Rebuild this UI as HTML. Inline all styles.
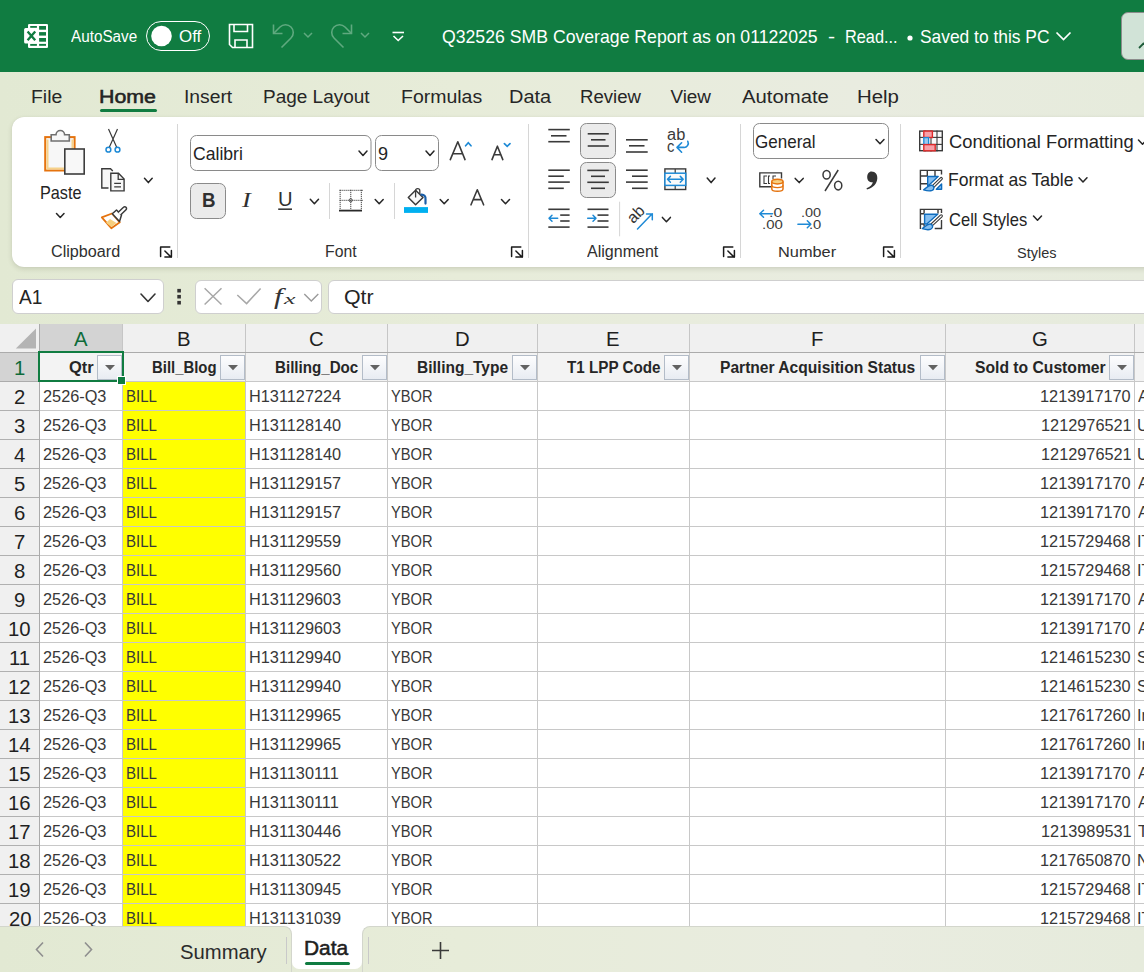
<!DOCTYPE html><html><head><meta charset="utf-8"><style>
html,body{margin:0;padding:0;}
body{width:1144px;height:972px;overflow:hidden;position:relative;background:#e6ebda;font-family:'Liberation Sans',sans-serif;}
.t{position:absolute;white-space:pre;line-height:1;transform-origin:0 0;}
.b{position:absolute;box-sizing:border-box;}
.s{position:absolute;overflow:visible;}
</style></head><body>
<div class="b" style="left:0px;top:72px;width:1144px;height:900px;background:linear-gradient(90deg,#e2e9d3 0%,#e7ecd9 40%,#e9ece0 75%,#e6ebdc 100%);"></div>
<div class="b" style="left:0px;top:0px;width:1144px;height:72px;background:#107c41;"></div>
<svg class="s" style="left:0px;top:0px;" width="72" height="72" viewBox="0 0 72 72"><rect x="28" y="23.9" width="20" height="24.1" rx="1.2" fill="#fff"/>
<g fill="#107c41"><rect x="39.1" y="26" width="6.9" height="3.7"/><rect x="39.1" y="32.1" width="6.9" height="3.5"/><rect x="39.1" y="38" width="6.9" height="3.7"/><rect x="39.1" y="43.9" width="6.9" height="1.9"/>
<rect x="30.2" y="26" width="6.7" height="1.8"/><rect x="30.2" y="43.9" width="6.7" height="1.9"/></g>
<rect x="24.1" y="28" width="13.9" height="15.6" rx="1.5" fill="#fff"/>
<path d="M27.6 31.4 L35.2 40.3 M35.2 31.4 L27.6 40.3" stroke="#107c41" stroke-width="2.3"/></svg>
<div class="t" style="left:71.30px;top:29.00px;font-size:16.00px;color:#ffffff;transform:scaleX(0.9543);">AutoSave</div>
<div class="b" style="left:146px;top:21px;width:64px;height:30px;border:1.5px solid #fff;border-radius:15px;"></div>
<svg class="s" style="left:150px;top:25px;" width="24" height="22" viewBox="0 0 24 22"><circle cx="11.5" cy="11" r="10.3" fill="#fff"/></svg>
<div class="t" style="left:178.64px;top:29.00px;font-size:16.90px;color:#ffffff;transform:scaleX(1.0024);">Off</div>
<svg class="s" style="left:228px;top:23px;" width="26" height="26" viewBox="0 0 26 26"><g fill="none" stroke="#fff" stroke-width="1.6">
<path d="M1.5 1.5 H24.5 V24.5 H4.5 L1.5 21.5 Z"/>
<path d="M6 1.5 V8.5 H19.5 V1.5"/>
<path d="M7 24.5 V17 H19 V24.5"/>
</g></svg>
<svg class="s" style="left:272px;top:23px;" width="24" height="26" viewBox="0 0 24 26"><g fill="none" stroke="#5fa97f" stroke-width="1.6">
<path d="M1.5 1.5 V10.5 H10.5"/>
<path d="M1.8 10.2 L8 4 A7.5 7.5 0 0 1 19 15 L9.5 24.5"/>
</g></svg>
<svg class="s" style="left:303px;top:32px;" width="11" height="7" viewBox="0 0 11 7"><path d="M1 1 L5 5 L9 1" fill="none" stroke="#5fa97f" stroke-width="1.5"/></svg>
<svg class="s" style="left:329px;top:23px;" width="24" height="26" viewBox="0 0 24 26"><g fill="none" stroke="#5fa97f" stroke-width="1.6">
<path d="M22.5 1.5 V10.5 H13.5"/>
<path d="M22.2 10.2 L16 4 A7.5 7.5 0 0 0 5 15 L14.5 24.5"/>
</g></svg>
<svg class="s" style="left:360px;top:32px;" width="11" height="7" viewBox="0 0 11 7"><path d="M1 1 L5 5 L9 1" fill="none" stroke="#5fa97f" stroke-width="1.5"/></svg>
<svg class="s" style="left:392px;top:31px;" width="13" height="11" viewBox="0 0 13 11"><path d="M0.5 1.5 H12" stroke="#fff" stroke-width="1.6"/><path d="M1.5 5 L6.2 9.5 L11 5" fill="none" stroke="#fff" stroke-width="1.6"/></svg>
<div class="t" style="left:441.60px;top:28.00px;font-size:18.20px;color:#ffffff;transform:scaleX(0.9708);">Q32526 SMB Coverage Report as on 01122025</div>
<div class="t" style="left:827.54px;top:28.00px;font-size:18.20px;color:#ffffff;transform:scaleX(1.1662);">-</div>
<div class="t" style="left:844.69px;top:28.00px;font-size:18.20px;color:#ffffff;transform:scaleX(0.8971);">Read...</div>
<svg class="s" style="left:906px;top:34px;" width="8" height="8" viewBox="0 0 8 8"><circle cx="4" cy="4" r="2.6" fill="#fff"/></svg>
<div class="t" style="left:919.82px;top:28.00px;font-size:18.20px;color:#ffffff;transform:scaleX(0.9557);">Saved to this PC</div>
<svg class="s" style="left:1055px;top:31px;" width="18" height="11" viewBox="0 0 18 11"><path d="M1.5 1.5 L8.5 8.5 L15.5 1.5" fill="none" stroke="#fff" stroke-width="1.7"/></svg>
<div class="b" style="left:1121px;top:12px;width:40px;height:48px;background:#d1e3d7;border:1.5px solid #8c8c8c;border-radius:7px;"></div>
<svg class="s" style="left:1138px;top:40px;" width="8" height="10" viewBox="0 0 8 10"><path d="M1 8 L6 3" stroke="#1c5a38" stroke-width="1.8"/></svg>
<div class="t" style="left:31.25px;top:88.00px;font-size:18.90px;color:#262626;transform:scaleX(1.0261);">File</div>
<div class="t" style="left:99.29px;top:88.00px;font-size:18.90px;color:#262626;transform:scaleX(1.1311);-webkit-text-stroke:0.55px #1f1f1f;">Home</div>
<div class="t" style="left:183.96px;top:88.00px;font-size:18.90px;color:#262626;transform:scaleX(1.0208);">Insert</div>
<div class="t" style="left:263.48px;top:88.00px;font-size:18.90px;color:#262626;transform:scaleX(1.0046);">Page Layout</div>
<div class="t" style="left:400.94px;top:88.00px;font-size:18.90px;color:#262626;transform:scaleX(1.0308);">Formulas</div>
<div class="t" style="left:509.40px;top:88.00px;font-size:18.90px;color:#262626;transform:scaleX(1.0556);">Data</div>
<div class="t" style="left:579.51px;top:88.00px;font-size:18.90px;color:#262626;transform:scaleX(0.9838);">Review</div>
<div class="t" style="left:670.41px;top:88.00px;font-size:18.90px;color:#262626;">View</div>
<div class="t" style="left:742.00px;top:88.00px;font-size:18.90px;color:#262626;transform:scaleX(1.0744);">Automate</div>
<div class="t" style="left:856.87px;top:88.00px;font-size:18.90px;color:#262626;transform:scaleX(1.0801);">Help</div>
<div class="b" style="left:100px;top:109px;width:57px;height:3px;background:#107c41;border-radius:2px;"></div>
<div class="b" style="left:12px;top:117px;width:1160px;height:150px;background:#fff;border-radius:12px;box-shadow:0 2px 5px rgba(60,70,40,0.16),0 0 1px rgba(0,0,0,0.10);"></div>
<svg class="s" style="left:0px;top:0px;pointer-events:none;" width="1144" height="972" viewBox="0 0 1144 972"><rect x="45.2" y="137.1" width="29.4" height="33.4" fill="#f7f7f7" stroke="#e5730e" stroke-width="2"/><path d="M47.5 139.5 V168.5 H64 M72.5 139.5 V152" fill="none" stroke="#f6d28a" stroke-width="2"/><path d="M51.2 141 V134.8 H56 A4.3 4.3 0 0 1 64.6 134.8 H69.3 V141 Z" fill="#f7f7f7" stroke="#707070" stroke-width="1.6"/><rect x="64.8" y="149" width="19.4" height="25" fill="#f8f8f8" stroke="#3d3d3d" stroke-width="1.6"/><path d="M56.5 213.5 L60.25 217.5 L64 213.5" fill="none" stroke="#262626" stroke-width="1.5" stroke-linecap="round" stroke-linejoin="round"/><path d="M108.5 129 L116.8 147.5 M117.5 129 L109.2 147.5" stroke="#3a3a3a" stroke-width="1.2"/><circle cx="108.4" cy="149.7" r="2.4" fill="#fff" stroke="#1e8ad6" stroke-width="1.5"/><circle cx="117.5" cy="149.7" r="2.4" fill="#fff" stroke="#1e8ad6" stroke-width="1.5"/><path d="M108.5 188 H101.8 V168.8 H110.5 L112.8 171" fill="#f8f8f8" stroke="#3a3a3a" stroke-width="1.4"/><path d="M110.8 190.9 V173.3 H118.5 L124.1 179 V190.9 Z" fill="#f8f8f8" stroke="#3a3a3a" stroke-width="1.4"/><path d="M118.2 173.3 V179.4 H124.1" fill="none" stroke="#3a3a3a" stroke-width="1.3"/><path d="M114.2 183.4 H121 M114.2 186.8 H121" stroke="#3a3a3a" stroke-width="1.2"/><path d="M144.5 178.3 L148.35 182.6 L152.2 178.3" fill="none" stroke="#262626" stroke-width="1.5" stroke-linecap="round" stroke-linejoin="round"/><path d="M101.8 217.3 L111.3 228.2 L119.8 222.3 L112 213.5 Z" fill="#fff" stroke="#e5730e" stroke-width="1.8" stroke-linejoin="round"/><path d="M106 222.8 L111.3 227 L116.5 223 L110 219 Z" fill="#f6cf7f"/><path d="M112.3 213.8 L116.5 210 L121.5 215 L119.5 221.5 Z" fill="#fff" stroke="#3a3a3a" stroke-width="1.5" stroke-linejoin="round"/><path d="M118 212.5 L123.5 207.3 A1.6 1.6 0 0 1 126 209.8 L120.6 215" fill="#fff" stroke="#3a3a3a" stroke-width="1.5"/><path d="M160.6 256.4 V246.9 H169.8 M164.9 251 L171.2 257.2 M171.4 250.4 V257 H164.9" fill="none" stroke="#1a1a1a" stroke-width="1.5" stroke-linecap="round" stroke-linejoin="round"/><rect x="190.5" y="135.5" width="180.5" height="35" rx="6" fill="#fff" stroke="#8a8a8a" stroke-width="1"/><rect x="375.5" y="135.5" width="63" height="35" rx="6" fill="#fff" stroke="#8a8a8a" stroke-width="1"/><path d="M359 151 L363.0 155.5 L367 151" fill="none" stroke="#262626" stroke-width="1.5" stroke-linecap="round" stroke-linejoin="round"/><path d="M426 151 L430.0 155.5 L434 151" fill="none" stroke="#262626" stroke-width="1.5" stroke-linecap="round" stroke-linejoin="round"/><rect x="190.5" y="183.5" width="35" height="35" rx="6" fill="#ebebeb" stroke="#8a8a8a" stroke-width="1"/><path d="M278.2 209.2 H292" stroke="#3a3a3a" stroke-width="1.6"/><path d="M310.3 199.3 L314.4 203.7 L318.5 199.3" fill="none" stroke="#262626" stroke-width="1.5" stroke-linecap="round" stroke-linejoin="round"/><g fill="#444"><rect x="339.6" y="189.8" width="1.1" height="1.1"/><rect x="339.6" y="199.8" width="1.1" height="1.1"/><rect x="341.6" y="189.8" width="1.1" height="1.1"/><rect x="341.6" y="199.8" width="1.1" height="1.1"/><rect x="343.6" y="189.8" width="1.1" height="1.1"/><rect x="343.6" y="199.8" width="1.1" height="1.1"/><rect x="345.6" y="189.8" width="1.1" height="1.1"/><rect x="345.6" y="199.8" width="1.1" height="1.1"/><rect x="347.6" y="189.8" width="1.1" height="1.1"/><rect x="347.6" y="199.8" width="1.1" height="1.1"/><rect x="349.6" y="189.8" width="1.1" height="1.1"/><rect x="349.6" y="199.8" width="1.1" height="1.1"/><rect x="351.6" y="189.8" width="1.1" height="1.1"/><rect x="351.6" y="199.8" width="1.1" height="1.1"/><rect x="353.6" y="189.8" width="1.1" height="1.1"/><rect x="353.6" y="199.8" width="1.1" height="1.1"/><rect x="355.6" y="189.8" width="1.1" height="1.1"/><rect x="355.6" y="199.8" width="1.1" height="1.1"/><rect x="357.6" y="189.8" width="1.1" height="1.1"/><rect x="357.6" y="199.8" width="1.1" height="1.1"/><rect x="359.6" y="189.8" width="1.1" height="1.1"/><rect x="359.6" y="199.8" width="1.1" height="1.1"/><rect x="361.6" y="189.8" width="1.1" height="1.1"/><rect x="361.6" y="199.8" width="1.1" height="1.1"/><rect x="339.6" y="189.8" width="1.1" height="1.1"/><rect x="350.2" y="189.8" width="1.1" height="1.1"/><rect x="360.8" y="189.8" width="1.1" height="1.1"/><rect x="339.6" y="191.8" width="1.1" height="1.1"/><rect x="350.2" y="191.8" width="1.1" height="1.1"/><rect x="360.8" y="191.8" width="1.1" height="1.1"/><rect x="339.6" y="193.8" width="1.1" height="1.1"/><rect x="350.2" y="193.8" width="1.1" height="1.1"/><rect x="360.8" y="193.8" width="1.1" height="1.1"/><rect x="339.6" y="195.8" width="1.1" height="1.1"/><rect x="350.2" y="195.8" width="1.1" height="1.1"/><rect x="360.8" y="195.8" width="1.1" height="1.1"/><rect x="339.6" y="197.8" width="1.1" height="1.1"/><rect x="350.2" y="197.8" width="1.1" height="1.1"/><rect x="360.8" y="197.8" width="1.1" height="1.1"/><rect x="339.6" y="199.8" width="1.1" height="1.1"/><rect x="350.2" y="199.8" width="1.1" height="1.1"/><rect x="360.8" y="199.8" width="1.1" height="1.1"/><rect x="339.6" y="201.8" width="1.1" height="1.1"/><rect x="350.2" y="201.8" width="1.1" height="1.1"/><rect x="360.8" y="201.8" width="1.1" height="1.1"/><rect x="339.6" y="203.8" width="1.1" height="1.1"/><rect x="350.2" y="203.8" width="1.1" height="1.1"/><rect x="360.8" y="203.8" width="1.1" height="1.1"/><rect x="339.6" y="205.8" width="1.1" height="1.1"/><rect x="350.2" y="205.8" width="1.1" height="1.1"/><rect x="360.8" y="205.8" width="1.1" height="1.1"/><rect x="339.6" y="207.8" width="1.1" height="1.1"/><rect x="350.2" y="207.8" width="1.1" height="1.1"/><rect x="360.8" y="207.8" width="1.1" height="1.1"/></g><path d="M339 210.6 H362" stroke="#2a2a2a" stroke-width="1.8"/><circle cx="350.7" cy="200.3" r="1.6" fill="none" stroke="#444" stroke-width="0.9"/><path d="M375.2 199.5 L379.2 203.8 L383.2 199.5" fill="none" stroke="#262626" stroke-width="1.5" stroke-linecap="round" stroke-linejoin="round"/><rect x="404" y="207.1" width="24" height="5.8" fill="#00b0f0"/><path d="M408.3 197.5 L415.6 190.2 L423 197.5 L415.6 204.8 Z" fill="#fafafa" stroke="#3a3a3a" stroke-width="1.5" stroke-linejoin="round"/><path d="M415.6 197.6 V190.8 A2.1 2.1 0 0 1 419.8 190.8 V194" fill="none" stroke="#3a3a3a" stroke-width="1.3"/><path d="M421.5 194.6 A3.8 3.8 0 0 1 425.5 199 V203.6" fill="none" stroke="#1a5ea8" stroke-width="2.2" stroke-linecap="round"/><path d="M440.2 199.5 L444.2 203.8 L448.2 199.5" fill="none" stroke="#262626" stroke-width="1.5" stroke-linecap="round" stroke-linejoin="round"/><path d="M501.5 199.5 L505.5 203.8 L509.5 199.5" fill="none" stroke="#262626" stroke-width="1.5" stroke-linecap="round" stroke-linejoin="round"/><path d="M450.3 159.6 L457.8 141.8 L465 159.6 M453 153.7 H462" fill="none" stroke="#3a3a3a" stroke-width="1.6" stroke-linecap="round" stroke-linejoin="round"/><path d="M465.6 145.8 L468.3 142.8 L471 145.8" fill="none" stroke="#1e8ad6" stroke-width="1.7" stroke-linecap="round"/><path d="M492 159.6 L497.4 146.2 L502.8 159.6 M494 154.7 H501" fill="none" stroke="#3a3a3a" stroke-width="1.6" stroke-linecap="round" stroke-linejoin="round"/><path d="M504.4 143.6 L507.2 146.3 L510 143.6" fill="none" stroke="#1e8ad6" stroke-width="1.7" stroke-linecap="round"/><path d="M471 204.8 L477.3 189.8 L483.6 204.8 M473.4 199.6 H481.2" fill="none" stroke="#3a3a3a" stroke-width="1.6" stroke-linecap="round" stroke-linejoin="round"/><path d="M838.2 170 L825 191 M823 174.7 a3.6 4.3 0 1 0 7.2 0 a3.6 4.3 0 1 0 -7.2 0 M834.6 185.6 a3.6 4.3 0 1 0 7.2 0 a3.6 4.3 0 1 0 -7.2 0" fill="none" stroke="#3a3a3a" stroke-width="1.5"/><path d="M511.6 256.4 V246.9 H520.8 M515.9 251 L522.2 257.2 M522.4 250.4 V257 H515.9" fill="none" stroke="#1a1a1a" stroke-width="1.5" stroke-linecap="round" stroke-linejoin="round"/><rect x="580.5" y="123.5" width="35" height="35" rx="6" fill="#ebebeb" stroke="#8a8a8a" stroke-width="1"/><rect x="580.5" y="162.5" width="35" height="35" rx="6" fill="#ebebeb" stroke="#8a8a8a" stroke-width="1"/><path d="M548.3 129.6 H569.8" stroke="#3a3a3a" stroke-width="1.6"/><path d="M551 135.8 H566.5" stroke="#3a3a3a" stroke-width="1.6"/><path d="M548.3 141.7 H569.8" stroke="#3a3a3a" stroke-width="1.6"/><path d="M587.7 133.8 H608.8" stroke="#3a3a3a" stroke-width="1.6"/><path d="M591 139.8 H605.5" stroke="#3a3a3a" stroke-width="1.6"/><path d="M587.7 146 H608.8" stroke="#3a3a3a" stroke-width="1.6"/><path d="M626 139.8 H647.7" stroke="#3a3a3a" stroke-width="1.6"/><path d="M629 145.8 H644.5" stroke="#3a3a3a" stroke-width="1.6"/><path d="M626 152 H647.7" stroke="#3a3a3a" stroke-width="1.6"/><path d="M548.3 170.2 H569.8" stroke="#3a3a3a" stroke-width="1.6"/><path d="M548.3 176.2 H563.8" stroke="#3a3a3a" stroke-width="1.6"/><path d="M548.3 182.1 H569.8" stroke="#3a3a3a" stroke-width="1.6"/><path d="M548.3 188.3 H563.8" stroke="#3a3a3a" stroke-width="1.6"/><path d="M587.3 170.4 H608.8" stroke="#3a3a3a" stroke-width="1.6"/><path d="M591 176.3 H605" stroke="#3a3a3a" stroke-width="1.6"/><path d="M587.3 182.3 H608.8" stroke="#3a3a3a" stroke-width="1.6"/><path d="M591 188.3 H605" stroke="#3a3a3a" stroke-width="1.6"/><path d="M626 170.2 H647.7" stroke="#3a3a3a" stroke-width="1.6"/><path d="M632 176.2 H647.7" stroke="#3a3a3a" stroke-width="1.6"/><path d="M626 182.1 H647.7" stroke="#3a3a3a" stroke-width="1.6"/><path d="M632 188.3 H647.7" stroke="#3a3a3a" stroke-width="1.6"/><path d="M687.8 141.3 A4.2 4.2 0 0 1 683.6 147.4 H677.2 M681.6 142.8 L677 147.4 L681.6 152.2" fill="none" stroke="#1e8ad6" stroke-width="1.6" stroke-linecap="round" stroke-linejoin="round"/><rect x="664.9" y="168.9" width="20.8" height="20.6" fill="#fafafa" stroke="#3a3a3a" stroke-width="1.4"/><path d="M675.2 169 V173 M675.2 185.5 V189.5" stroke="#3a3a3a" stroke-width="1.2"/><rect x="664.9" y="173.2" width="20.8" height="12.2" fill="#fafafa" stroke="#1e8ad6" stroke-width="1.5"/><path d="M667.5 179.3 H683.2 M670.4 176.4 L667.5 179.3 L670.4 182.2 M680.3 176.4 L683.2 179.3 L680.3 182.2" fill="none" stroke="#1e8ad6" stroke-width="1.5" stroke-linecap="round" stroke-linejoin="round"/><path d="M707.2 178 L711.1 182.6 L715 178" fill="none" stroke="#262626" stroke-width="1.5" stroke-linecap="round" stroke-linejoin="round"/><path d="M548.3 209.3 H569.6" stroke="#3a3a3a" stroke-width="1.6"/><path d="M560.2 215.1 H569.6" stroke="#3a3a3a" stroke-width="1.6"/><path d="M560.2 221 H569.6" stroke="#3a3a3a" stroke-width="1.6"/><path d="M548.3 227.1 H569.6" stroke="#3a3a3a" stroke-width="1.6"/><path d="M557.7 218.2 H549 M552 215.2 L549 218.2 L552 221.2" fill="none" stroke="#1e8ad6" stroke-width="1.5" stroke-linecap="round" stroke-linejoin="round"/><path d="M587.5 209.3 H608.5" stroke="#3a3a3a" stroke-width="1.6"/><path d="M597.5 215.1 H608.5" stroke="#3a3a3a" stroke-width="1.6"/><path d="M597.5 221 H608.5" stroke="#3a3a3a" stroke-width="1.6"/><path d="M587.5 227.1 H608.5" stroke="#3a3a3a" stroke-width="1.6"/><path d="M587.7 218.2 H596 M593 215.2 L596 218.2 L593 221.2" fill="none" stroke="#1e8ad6" stroke-width="1.5" stroke-linecap="round" stroke-linejoin="round"/><path d="M619.6 201.7 V236.3" stroke="#d6d6d6" stroke-width="1"/><path d="M637.5 229 L652.2 213.8 M646.5 214 H652.3 V219.8" fill="none" stroke="#1e8ad6" stroke-width="1.5" stroke-linecap="round"/><path d="M662.4 217.4 L666.4 221.8 L670.4 217.4" fill="none" stroke="#262626" stroke-width="1.5" stroke-linecap="round" stroke-linejoin="round"/><path d="M723.6 256.4 V246.9 H732.8 M727.9 251 L734.2 257.2 M734.4 250.4 V257 H727.9" fill="none" stroke="#1a1a1a" stroke-width="1.5" stroke-linecap="round" stroke-linejoin="round"/><rect x="753.5" y="123.5" width="135" height="35" rx="6" fill="#fff" stroke="#8a8a8a" stroke-width="1"/><path d="M876 139.5 L880.0 143.8 L884 139.5" fill="none" stroke="#262626" stroke-width="1.5" stroke-linecap="round" stroke-linejoin="round"/><path d="M781.5 178.5 V172.9 H759.8 V186.7 H771" fill="none" stroke="#3a3a3a" stroke-width="1.4"/><path d="M767 176 H764 V183.5 H767 M770 176 H768.5 V183.5 H770 M776 176 H773 V179" fill="none" stroke="#3a3a3a" stroke-width="1.1"/><path d="M771.8 181.6 V189 A5.6 2.3 0 0 0 783 189 V181.6" fill="#fff" stroke="#e5730e" stroke-width="1.5"/><ellipse cx="777.4" cy="181.6" rx="5.6" ry="2.3" fill="#f6cf7f" stroke="#e5730e" stroke-width="1.5"/><path d="M771.8 185.3 A5.6 2.3 0 0 0 783 185.3" fill="none" stroke="#e5730e" stroke-width="1.3"/><path d="M795.2 178.4 L799.2 182.6 L803.2 178.4" fill="none" stroke="#262626" stroke-width="1.5" stroke-linecap="round" stroke-linejoin="round"/><path d="M772.5 213.8 H759.8 M763.5 210.3 L759.8 213.8 L763.5 217.3" fill="none" stroke="#1e8ad6" stroke-width="1.5" stroke-linecap="round" stroke-linejoin="round"/><path d="M797.9 224.3 H810.8 M807.3 220.8 L810.8 224.3 L807.3 227.8" fill="none" stroke="#1e8ad6" stroke-width="1.5" stroke-linecap="round" stroke-linejoin="round"/><path d="M883.6 256.4 V246.9 H892.8 M887.9 251 L894.2 257.2 M894.4 250.4 V257 H887.9" fill="none" stroke="#1a1a1a" stroke-width="1.5" stroke-linecap="round" stroke-linejoin="round"/><rect x="919.7" y="131.1" width="22.6" height="19.6" fill="#fafafa" stroke="#3a3a3a" stroke-width="1.4"/><path d="M919 137.4 H943" stroke="#3a3a3a" stroke-width="1.1"/><path d="M919 144.4 H943" stroke="#3a3a3a" stroke-width="1.1"/><path d="M925.0 130.4 V151.4" stroke="#3a3a3a" stroke-width="1.1"/><path d="M931.0 130.4 V151.4" stroke="#3a3a3a" stroke-width="1.1"/><path d="M937.0 130.4 V151.4" stroke="#3a3a3a" stroke-width="1.1"/><rect x="923.8" y="131.1" width="8.6" height="6.4" fill="#f7a0a8" stroke="#dd2a2a" stroke-width="1.4"/><rect x="923.8" y="137.6" width="4.8" height="7" fill="#9cc8ee" stroke="#1e8ad6" stroke-width="1.3"/><rect x="923.8" y="144.6" width="11.4" height="6.2" fill="#f7a0a8" stroke="#dd2a2a" stroke-width="1.4"/><path d="M920.4 190 V170.4 H941.5 V174.6 M920.4 176 H927.5 M920.4 183.8 H927.5 M927.3 170.4 V176 M935 170.4 V176" fill="none" stroke="#3a3a3a" stroke-width="1.4"/><path d="M927.7 176.5 H938.2 L927.7 186.2 Z" fill="#86bff0" stroke="#0f6cbd" stroke-width="1.4" stroke-linejoin="round"/><path d="M941.6 184 V189.3 H936.3 Z" fill="#86bff0" stroke="#0f6cbd" stroke-width="1.4" stroke-linejoin="round"/><path d="M941.2 178.6 L933.6 186" stroke="#fff" stroke-width="5.5" stroke-linecap="round"/><path d="M941.2 178.6 L933.6 186" stroke="#3a3a3a" stroke-width="3.4" stroke-linecap="round"/><path d="M941.2 178.6 L933.6 186" stroke="#fff" stroke-width="1.2" stroke-linecap="round"/><path d="M923.6 189.8 C926.1 188.3 928.1 184.8 931.6 185.20000000000002 C934.6 185.8 934.6 189.3 932.1 190.4 C929.6 191.4 926.6 190.8 923.6 189.8 Z" fill="#86bff0" stroke="#0f6cbd" stroke-width="1.4" stroke-linejoin="round"/><path d="M920.4 229 V209.4 H941.5 V213 M941.5 220 V228.5 H934.7 M924.1 209.4 V213.5 M938 209.4 V213.5 M920.4 213.8 H924 M920.4 224 H924 M924.1 224 V226.5" fill="none" stroke="#3a3a3a" stroke-width="1.4"/><path d="M924.6 214.2 H937.8 L926.8 224 H924.6 Z" fill="#86bff0" stroke="#0f6cbd" stroke-width="1.4" stroke-linejoin="round"/><path d="M941.2 216 L932 224.6" stroke="#fff" stroke-width="5.5" stroke-linecap="round"/><path d="M941.2 216 L932 224.6" stroke="#3a3a3a" stroke-width="3.4" stroke-linecap="round"/><path d="M941.2 216 L932 224.6" stroke="#fff" stroke-width="1.2" stroke-linecap="round"/><path d="M922.3 228.6 C924.8 227.1 926.8 223.6 930.3 224.0 C933.3 224.6 933.3 228.1 930.8 229.2 C928.3 230.2 925.3 229.6 922.3 228.6 Z" fill="#86bff0" stroke="#0f6cbd" stroke-width="1.4" stroke-linejoin="round"/><path d="M1138.5 140 L1142.5 144.3 L1146.5 140" fill="none" stroke="#262626" stroke-width="1.5" stroke-linecap="round" stroke-linejoin="round"/><path d="M1079 177.8 L1083.0 182 L1087 177.8" fill="none" stroke="#262626" stroke-width="1.5" stroke-linecap="round" stroke-linejoin="round"/><path d="M1033.5 216 L1037.5 220.3 L1041.5 216" fill="none" stroke="#262626" stroke-width="1.5" stroke-linecap="round" stroke-linejoin="round"/></svg>
<div class="t" style="left:40.00px;top:185.00px;font-size:17.70px;color:#242424;transform:scaleX(0.9184);">Paste</div>
<div class="t" style="left:50.69px;top:244.00px;font-size:16.00px;color:#303030;transform:scaleX(1.0099);">Clipboard</div>
<div class="t" style="left:324.54px;top:244.00px;font-size:16.00px;color:#303030;transform:scaleX(0.9856);">Font</div>
<div class="t" style="left:586.70px;top:244.00px;font-size:16.00px;color:#303030;transform:scaleX(1.0023);">Alignment</div>
<div class="t" style="left:778.49px;top:244.00px;font-size:15.40px;color:#303030;transform:scaleX(1.0622);">Number</div>
<div class="t" style="left:1017.05px;top:245.00px;font-size:15.40px;color:#303030;transform:scaleX(0.9427);">Styles</div>
<div class="t" style="left:192.72px;top:145.00px;font-size:18.60px;color:#242424;transform:scaleX(0.9466);">Calibri</div>
<div class="t" style="left:377.79px;top:145.00px;font-size:18.60px;color:#242424;transform:scaleX(0.9712);">9</div>
<div class="t" style="left:755.35px;top:133.00px;font-size:18.60px;color:#242424;transform:scaleX(0.9159);">General</div>
<div class="t" style="left:948.58px;top:133.00px;font-size:18.00px;color:#242424;transform:scaleX(1.0195);">Conditional Formatting</div>
<div class="t" style="left:948.10px;top:171.00px;font-size:18.60px;color:#242424;transform:scaleX(0.9429);">Format as Table</div>
<div class="t" style="left:948.67px;top:211.00px;font-size:18.60px;color:#242424;transform:scaleX(0.8899);">Cell Styles</div>
<div class="t" style="left:201.59px;top:190.00px;font-size:20.90px;color:#303030;font-weight:700;transform:scaleX(0.8942);">B</div>
<div class="t" style="left:242.23px;top:190.00px;font-size:20.90px;color:#303030;font-style:italic;font-family:'Liberation Serif',serif;transform:scaleX(1.2632);">I</div>
<div class="t" style="left:277.89px;top:189.00px;font-size:20.30px;color:#303030;transform:scaleX(0.9939);">U</div>
<div class="t" style="left:667.34px;top:127.00px;font-size:16.00px;color:#3a3a3a;transform:scaleX(1.0255);">ab</div>
<div class="t" style="left:667.41px;top:138.00px;font-size:16.40px;color:#3a3a3a;transform:scaleX(0.8971);">c</div>
<div class="t" style="left:769.28px;top:206.00px;font-size:13.20px;color:#3a3a3a;transform:scaleX(1.1950);">.0</div>
<div class="t" style="left:761.76px;top:218.00px;font-size:13.10px;color:#3a3a3a;transform:scaleX(1.1405);">.00</div>
<div class="t" style="left:800.79px;top:206.00px;font-size:13.20px;color:#3a3a3a;transform:scaleX(1.1019);">.00</div>
<div class="t" style="left:808.67px;top:218.00px;font-size:13.10px;color:#3a3a3a;transform:scaleX(1.1289);">.0</div>
<div class="b" style="left:177px;top:124px;width:1px;height:134px;background:#d6d6d6;"></div>
<div class="b" style="left:528px;top:124px;width:1px;height:134px;background:#d6d6d6;"></div>
<div class="b" style="left:740px;top:124px;width:1px;height:134px;background:#d6d6d6;"></div>
<div class="b" style="left:900px;top:124px;width:1px;height:134px;background:#d6d6d6;"></div>
<div class="b" style="left:329px;top:183px;width:1px;height:36px;background:#d6d6d6;"></div>
<div class="b" style="left:394px;top:183px;width:1px;height:36px;background:#d6d6d6;"></div>
<svg class="s" style="left:864px;top:170px;" width="16" height="22" viewBox="0 0 16 22"><path d="M7.5 1.5 C11.5 1.5 13.6 4.5 13.3 8.5 C13 13.5 9.5 17.5 3 19.5 L2.5 18.3 C6.5 16.5 8.5 14.2 8.8 12.2 C5.5 12.5 3.2 10.5 3.2 7.2 C3.2 3.8 5 1.5 7.5 1.5 Z" fill="#333"/></svg>
<div class="t" style="left:624px;top:215px;font-size:16px;color:#333;transform:rotate(-45deg);transform-origin:0 0;">ab</div>
<div class="b" style="left:12px;top:279px;width:152px;height:35px;background:#fff;border:1px solid #cfcfcf;border-radius:6px;"></div>
<div class="t" style="left:18.90px;top:288.00px;font-size:19.60px;color:#242424;transform:scaleX(0.9770);">A1</div>
<div class="b" style="left:195px;top:280px;width:127px;height:34px;background:#fff;border:1px solid #cfcfcf;border-radius:6px;"></div>
<div class="b" style="left:328px;top:280px;width:830px;height:34px;background:#fff;border:1px solid #cfcfcf;border-radius:6px;"></div>
<div class="t" style="left:343.74px;top:288.00px;font-size:19.60px;color:#242424;transform:scaleX(1.0897);">Qtr</div>
<svg class="s" style="left:0px;top:0px;pointer-events:none;" width="1144" height="972" viewBox="0 0 1144 972">
<path d="M141 294 L148 301.5 L155 294" fill="none" stroke="#333" stroke-width="1.6" stroke-linecap="round" stroke-linejoin="round"/>
<rect x="177.3" y="288.9" width="3.6" height="3.6" fill="#333"/>
<rect x="177.3" y="294.9" width="3.6" height="3.6" fill="#333"/>
<rect x="177.3" y="300.9" width="3.6" height="3.6" fill="#333"/>
<path d="M204.6 288.2 L221.5 304.5 M221.5 288.2 L204.6 304.5" stroke="#a8a8a8" stroke-width="1.5"/>
<path d="M237.3 295 L246.6 303.6 L260.6 288.4" fill="none" stroke="#a8a8a8" stroke-width="1.5"/>
<path d="M304.3 294 L311.3 301 L318.3 294" fill="none" stroke="#9a9a9a" stroke-width="1.4"/>
</svg>
<div class="t" style="left:273.89px;top:284.00px;font-size:24.00px;color:#333;font-style:italic;font-family:'Liberation Serif',serif;transform:scaleX(1.2771);">f</div>
<div class="t" style="left:283.89px;top:292.00px;font-size:14.20px;color:#333;font-style:italic;font-family:'Liberation Serif',serif;transform:scaleX(1.8310);">x</div>
<div class="b" style="left:0px;top:324px;width:1144px;height:603px;background:#fff;"></div>
<div class="b" style="left:0px;top:324px;width:1144px;height:28px;background:#f0f0f0;"></div>
<div class="b" style="left:40px;top:324px;width:82px;height:28px;background:#d3d3d3;"></div>
<div class="b" style="left:0px;top:353px;width:39px;height:574px;background:#f0f0f0;"></div>
<div class="b" style="left:0px;top:353px;width:39px;height:28px;background:#d3d3d3;"></div>
<div class="b" style="left:40px;top:353px;width:1104px;height:28px;background:#f3f3f3;"></div>
<div class="b" style="left:123px;top:382px;width:122px;height:545px;background:#ffff00;"></div>
<svg class="s" style="left:15px;top:328px;" width="22" height="22" viewBox="0 0 22 22"><path d="M21 0.5 V20.5 H0.8 Z" fill="#b4b4b4"/></svg>
<div class="b" style="left:39px;top:324px;width:1px;height:603px;background:#c8c8c8;"></div>
<div class="b" style="left:122px;top:324px;width:1px;height:603px;background:#c8c8c8;"></div>
<div class="b" style="left:245px;top:324px;width:1px;height:603px;background:#c8c8c8;"></div>
<div class="b" style="left:387px;top:324px;width:1px;height:603px;background:#c8c8c8;"></div>
<div class="b" style="left:537px;top:324px;width:1px;height:603px;background:#c8c8c8;"></div>
<div class="b" style="left:689px;top:324px;width:1px;height:603px;background:#c8c8c8;"></div>
<div class="b" style="left:945px;top:324px;width:1px;height:603px;background:#c8c8c8;"></div>
<div class="b" style="left:1134px;top:324px;width:1px;height:603px;background:#c8c8c8;"></div>
<div class="b" style="left:122px;top:324px;width:1px;height:28px;background:#c6c6c6;"></div>
<div class="b" style="left:245px;top:324px;width:1px;height:28px;background:#c6c6c6;"></div>
<div class="b" style="left:387px;top:324px;width:1px;height:28px;background:#c6c6c6;"></div>
<div class="b" style="left:537px;top:324px;width:1px;height:28px;background:#c6c6c6;"></div>
<div class="b" style="left:689px;top:324px;width:1px;height:28px;background:#c6c6c6;"></div>
<div class="b" style="left:945px;top:324px;width:1px;height:28px;background:#c6c6c6;"></div>
<div class="b" style="left:1134px;top:324px;width:1px;height:28px;background:#c6c6c6;"></div>
<div class="b" style="left:39px;top:324px;width:1px;height:603px;background:#ababab;"></div>
<div class="b" style="left:0px;top:352px;width:1144px;height:1px;background:#ababab;"></div>
<div class="b" style="left:40px;top:381px;width:1104px;height:1px;background:#c8c8c8;"></div>
<div class="b" style="left:0px;top:381px;width:39px;height:1px;background:#b0b0b0;"></div>
<div class="b" style="left:40px;top:410px;width:1104px;height:1px;background:#c8c8c8;"></div>
<div class="b" style="left:0px;top:410px;width:39px;height:1px;background:#b0b0b0;"></div>
<div class="b" style="left:40px;top:439px;width:1104px;height:1px;background:#c8c8c8;"></div>
<div class="b" style="left:0px;top:439px;width:39px;height:1px;background:#b0b0b0;"></div>
<div class="b" style="left:40px;top:468px;width:1104px;height:1px;background:#c8c8c8;"></div>
<div class="b" style="left:0px;top:468px;width:39px;height:1px;background:#b0b0b0;"></div>
<div class="b" style="left:40px;top:497px;width:1104px;height:1px;background:#c8c8c8;"></div>
<div class="b" style="left:0px;top:497px;width:39px;height:1px;background:#b0b0b0;"></div>
<div class="b" style="left:40px;top:526px;width:1104px;height:1px;background:#c8c8c8;"></div>
<div class="b" style="left:0px;top:526px;width:39px;height:1px;background:#b0b0b0;"></div>
<div class="b" style="left:40px;top:555px;width:1104px;height:1px;background:#c8c8c8;"></div>
<div class="b" style="left:0px;top:555px;width:39px;height:1px;background:#b0b0b0;"></div>
<div class="b" style="left:40px;top:584px;width:1104px;height:1px;background:#c8c8c8;"></div>
<div class="b" style="left:0px;top:584px;width:39px;height:1px;background:#b0b0b0;"></div>
<div class="b" style="left:40px;top:613px;width:1104px;height:1px;background:#c8c8c8;"></div>
<div class="b" style="left:0px;top:613px;width:39px;height:1px;background:#b0b0b0;"></div>
<div class="b" style="left:40px;top:642px;width:1104px;height:1px;background:#c8c8c8;"></div>
<div class="b" style="left:0px;top:642px;width:39px;height:1px;background:#b0b0b0;"></div>
<div class="b" style="left:40px;top:671px;width:1104px;height:1px;background:#c8c8c8;"></div>
<div class="b" style="left:0px;top:671px;width:39px;height:1px;background:#b0b0b0;"></div>
<div class="b" style="left:40px;top:700px;width:1104px;height:1px;background:#c8c8c8;"></div>
<div class="b" style="left:0px;top:700px;width:39px;height:1px;background:#b0b0b0;"></div>
<div class="b" style="left:40px;top:729px;width:1104px;height:1px;background:#c8c8c8;"></div>
<div class="b" style="left:0px;top:729px;width:39px;height:1px;background:#b0b0b0;"></div>
<div class="b" style="left:40px;top:758px;width:1104px;height:1px;background:#c8c8c8;"></div>
<div class="b" style="left:0px;top:758px;width:39px;height:1px;background:#b0b0b0;"></div>
<div class="b" style="left:40px;top:787px;width:1104px;height:1px;background:#c8c8c8;"></div>
<div class="b" style="left:0px;top:787px;width:39px;height:1px;background:#b0b0b0;"></div>
<div class="b" style="left:40px;top:816px;width:1104px;height:1px;background:#c8c8c8;"></div>
<div class="b" style="left:0px;top:816px;width:39px;height:1px;background:#b0b0b0;"></div>
<div class="b" style="left:40px;top:845px;width:1104px;height:1px;background:#c8c8c8;"></div>
<div class="b" style="left:0px;top:845px;width:39px;height:1px;background:#b0b0b0;"></div>
<div class="b" style="left:40px;top:874px;width:1104px;height:1px;background:#c8c8c8;"></div>
<div class="b" style="left:0px;top:874px;width:39px;height:1px;background:#b0b0b0;"></div>
<div class="b" style="left:40px;top:903px;width:1104px;height:1px;background:#c8c8c8;"></div>
<div class="b" style="left:0px;top:903px;width:39px;height:1px;background:#b0b0b0;"></div>
<div class="b" style="left:0px;top:381px;width:39px;height:1px;background:#ababab;"></div>
<div class="t" style="left:74.23px;top:329.00px;font-size:20.30px;color:#0e6b3a;transform:scaleX(1.0024);">A</div>
<div class="t" style="left:176.93px;top:329.00px;font-size:20.30px;color:#1f1f1f;transform:scaleX(1.0024);">B</div>
<div class="t" style="left:309.02px;top:329.00px;font-size:20.30px;color:#1f1f1f;transform:scaleX(1.0024);">C</div>
<div class="t" style="left:454.82px;top:329.00px;font-size:20.30px;color:#1f1f1f;transform:scaleX(1.0024);">D</div>
<div class="t" style="left:606.33px;top:329.00px;font-size:20.30px;color:#1f1f1f;transform:scaleX(1.0024);">E</div>
<div class="t" style="left:810.89px;top:329.00px;font-size:20.30px;color:#1f1f1f;transform:scaleX(1.0024);">F</div>
<div class="t" style="left:1032.32px;top:329.00px;font-size:20.30px;color:#1f1f1f;transform:scaleX(1.0024);">G</div>
<div class="t" style="left:1166.67px;top:329.00px;font-size:20.30px;color:#1f1f1f;transform:scaleX(1.0024);">H</div>
<div class="t" style="left:14.05px;top:358.00px;font-size:20.30px;color:#0e6b3a;transform:scaleX(1.0024);">1</div>
<div class="t" style="left:14.35px;top:387.00px;font-size:20.30px;color:#1f1f1f;transform:scaleX(1.0024);">2</div>
<div class="t" style="left:14.35px;top:416.00px;font-size:20.30px;color:#1f1f1f;transform:scaleX(1.0024);">3</div>
<div class="t" style="left:14.45px;top:445.00px;font-size:20.30px;color:#1f1f1f;transform:scaleX(1.0024);">4</div>
<div class="t" style="left:14.35px;top:474.00px;font-size:20.30px;color:#1f1f1f;transform:scaleX(1.0024);">5</div>
<div class="t" style="left:14.25px;top:503.00px;font-size:20.30px;color:#1f1f1f;transform:scaleX(1.0024);">6</div>
<div class="t" style="left:14.35px;top:532.00px;font-size:20.30px;color:#1f1f1f;transform:scaleX(1.0024);">7</div>
<div class="t" style="left:14.30px;top:561.00px;font-size:20.30px;color:#1f1f1f;transform:scaleX(1.0024);">8</div>
<div class="t" style="left:14.35px;top:590.00px;font-size:20.30px;color:#1f1f1f;transform:scaleX(1.0024);">9</div>
<div class="t" style="left:8.30px;top:619.00px;font-size:20.30px;color:#1f1f1f;transform:scaleX(1.0024);">10</div>
<div class="t" style="left:9.16px;top:648.00px;font-size:20.30px;color:#1f1f1f;transform:scaleX(1.0024);">11</div>
<div class="t" style="left:8.45px;top:677.00px;font-size:20.30px;color:#1f1f1f;transform:scaleX(1.0024);">12</div>
<div class="t" style="left:8.35px;top:706.00px;font-size:20.30px;color:#1f1f1f;transform:scaleX(1.0024);">13</div>
<div class="t" style="left:8.25px;top:735.00px;font-size:20.30px;color:#1f1f1f;transform:scaleX(1.0024);">14</div>
<div class="t" style="left:8.35px;top:764.00px;font-size:20.30px;color:#1f1f1f;transform:scaleX(1.0024);">15</div>
<div class="t" style="left:8.35px;top:793.00px;font-size:20.30px;color:#1f1f1f;transform:scaleX(1.0024);">16</div>
<div class="t" style="left:8.45px;top:822.00px;font-size:20.30px;color:#1f1f1f;transform:scaleX(1.0024);">17</div>
<div class="t" style="left:8.35px;top:851.00px;font-size:20.30px;color:#1f1f1f;transform:scaleX(1.0024);">18</div>
<div class="t" style="left:8.40px;top:880.00px;font-size:20.30px;color:#1f1f1f;transform:scaleX(1.0024);">19</div>
<div class="t" style="left:8.55px;top:909.00px;font-size:20.30px;color:#1f1f1f;transform:scaleX(1.0024);">20</div>
<div class="t" style="left:68.84px;top:360.00px;font-size:16.00px;color:#262626;font-weight:700;transform:scaleX(1.0251);">Qtr</div>
<div class="t" style="left:151.63px;top:360.00px;font-size:16.00px;color:#262626;font-weight:700;transform:scaleX(0.9304);">Bill_Blog</div>
<div class="t" style="left:274.72px;top:360.00px;font-size:16.00px;color:#262626;font-weight:700;transform:scaleX(0.9459);">Billing_Doc</div>
<div class="t" style="left:416.79px;top:360.00px;font-size:16.00px;color:#262626;font-weight:700;transform:scaleX(0.9695);">Billing_Type</div>
<div class="t" style="left:566.75px;top:360.00px;font-size:16.00px;color:#262626;font-weight:700;transform:scaleX(0.9500);">T1 LPP Code</div>
<div class="t" style="left:719.79px;top:360.00px;font-size:16.00px;color:#262626;font-weight:700;transform:scaleX(0.9746);">Partner Acquisition Status</div>
<div class="t" style="left:974.53px;top:360.00px;font-size:16.00px;color:#262626;font-weight:700;transform:scaleX(0.9801);">Sold to Customer</div>
<div class="b" style="left:97px;top:355px;width:25px;height:25px;border:1px solid #b3bcc8;background:linear-gradient(#fdfdfe,#e8ecf2);"></div>
<svg class="s" style="left:104.5px;top:364.8px;" width="11" height="6" viewBox="0 0 11 6"><path d="M0 0 H10 L5 5.2 Z" fill="#626262"/></svg>
<div class="b" style="left:220px;top:355px;width:25px;height:25px;border:1px solid #b3bcc8;background:linear-gradient(#fdfdfe,#e8ecf2);"></div>
<svg class="s" style="left:227.5px;top:364.8px;" width="11" height="6" viewBox="0 0 11 6"><path d="M0 0 H10 L5 5.2 Z" fill="#626262"/></svg>
<div class="b" style="left:362px;top:355px;width:25px;height:25px;border:1px solid #b3bcc8;background:linear-gradient(#fdfdfe,#e8ecf2);"></div>
<svg class="s" style="left:369.5px;top:364.8px;" width="11" height="6" viewBox="0 0 11 6"><path d="M0 0 H10 L5 5.2 Z" fill="#626262"/></svg>
<div class="b" style="left:512px;top:355px;width:25px;height:25px;border:1px solid #b3bcc8;background:linear-gradient(#fdfdfe,#e8ecf2);"></div>
<svg class="s" style="left:519.5px;top:364.8px;" width="11" height="6" viewBox="0 0 11 6"><path d="M0 0 H10 L5 5.2 Z" fill="#626262"/></svg>
<div class="b" style="left:664px;top:355px;width:25px;height:25px;border:1px solid #b3bcc8;background:linear-gradient(#fdfdfe,#e8ecf2);"></div>
<svg class="s" style="left:671.5px;top:364.8px;" width="11" height="6" viewBox="0 0 11 6"><path d="M0 0 H10 L5 5.2 Z" fill="#626262"/></svg>
<div class="b" style="left:920px;top:355px;width:25px;height:25px;border:1px solid #b3bcc8;background:linear-gradient(#fdfdfe,#e8ecf2);"></div>
<svg class="s" style="left:927.5px;top:364.8px;" width="11" height="6" viewBox="0 0 11 6"><path d="M0 0 H10 L5 5.2 Z" fill="#626262"/></svg>
<div class="b" style="left:1109px;top:355px;width:25px;height:25px;border:1px solid #b3bcc8;background:linear-gradient(#fdfdfe,#e8ecf2);"></div>
<svg class="s" style="left:1116.5px;top:364.8px;" width="11" height="6" viewBox="0 0 11 6"><path d="M0 0 H10 L5 5.2 Z" fill="#626262"/></svg>
<div class="b" style="left:38px;top:351px;width:86px;height:31px;border:2px solid #107c41;"></div>
<div class="b" style="left:39px;top:351px;width:83px;height:2px;background:#107c41;"></div>
<div class="b" style="left:118px;top:377px;width:7px;height:7px;background:#107c41;outline:1px solid #fff;"></div>
<div class="t" style="left:42.89px;top:389.00px;font-size:16.00px;color:#383838;transform:scaleX(1.0186);">2526-Q3</div>
<div class="t" style="left:125.99px;top:389.00px;font-size:16.00px;color:#383838;transform:scaleX(0.9415);">BILL</div>
<div class="t" style="left:248.50px;top:389.00px;font-size:16.00px;color:#383838;transform:scaleX(1.0186);">H131127224</div>
<div class="t" style="left:390.83px;top:389.00px;font-size:16.00px;color:#383838;transform:scaleX(0.9171);">YBOR</div>
<div class="t" style="left:1040.35px;top:389.00px;font-size:16.00px;color:#383838;transform:scaleX(1.0186);">1213917170</div>
<div class="t" style="left:1138.00px;top:389.00px;font-size:16.00px;color:#383838;transform:scaleX(1.0186);">AB</div>
<div class="t" style="left:42.89px;top:418.00px;font-size:16.00px;color:#383838;transform:scaleX(1.0186);">2526-Q3</div>
<div class="t" style="left:125.99px;top:418.00px;font-size:16.00px;color:#383838;transform:scaleX(0.9415);">BILL</div>
<div class="t" style="left:248.50px;top:418.00px;font-size:16.00px;color:#383838;transform:scaleX(1.0186);">H131128140</div>
<div class="t" style="left:390.83px;top:418.00px;font-size:16.00px;color:#383838;transform:scaleX(0.9171);">YBOR</div>
<div class="t" style="left:1040.52px;top:418.00px;font-size:16.00px;color:#383838;transform:scaleX(1.0186);">1212976521</div>
<div class="t" style="left:1136.78px;top:418.00px;font-size:16.00px;color:#383838;transform:scaleX(1.0186);">UN</div>
<div class="t" style="left:42.89px;top:447.00px;font-size:16.00px;color:#383838;transform:scaleX(1.0186);">2526-Q3</div>
<div class="t" style="left:125.99px;top:447.00px;font-size:16.00px;color:#383838;transform:scaleX(0.9415);">BILL</div>
<div class="t" style="left:248.50px;top:447.00px;font-size:16.00px;color:#383838;transform:scaleX(1.0186);">H131128140</div>
<div class="t" style="left:390.83px;top:447.00px;font-size:16.00px;color:#383838;transform:scaleX(0.9171);">YBOR</div>
<div class="t" style="left:1040.52px;top:447.00px;font-size:16.00px;color:#383838;transform:scaleX(1.0186);">1212976521</div>
<div class="t" style="left:1136.78px;top:447.00px;font-size:16.00px;color:#383838;transform:scaleX(1.0186);">UN</div>
<div class="t" style="left:42.89px;top:476.00px;font-size:16.00px;color:#383838;transform:scaleX(1.0186);">2526-Q3</div>
<div class="t" style="left:125.99px;top:476.00px;font-size:16.00px;color:#383838;transform:scaleX(0.9415);">BILL</div>
<div class="t" style="left:248.50px;top:476.00px;font-size:16.00px;color:#383838;transform:scaleX(1.0186);">H131129157</div>
<div class="t" style="left:390.83px;top:476.00px;font-size:16.00px;color:#383838;transform:scaleX(0.9171);">YBOR</div>
<div class="t" style="left:1040.35px;top:476.00px;font-size:16.00px;color:#383838;transform:scaleX(1.0186);">1213917170</div>
<div class="t" style="left:1138.00px;top:476.00px;font-size:16.00px;color:#383838;transform:scaleX(1.0186);">AB</div>
<div class="t" style="left:42.89px;top:505.00px;font-size:16.00px;color:#383838;transform:scaleX(1.0186);">2526-Q3</div>
<div class="t" style="left:125.99px;top:505.00px;font-size:16.00px;color:#383838;transform:scaleX(0.9415);">BILL</div>
<div class="t" style="left:248.50px;top:505.00px;font-size:16.00px;color:#383838;transform:scaleX(1.0186);">H131129157</div>
<div class="t" style="left:390.83px;top:505.00px;font-size:16.00px;color:#383838;transform:scaleX(0.9171);">YBOR</div>
<div class="t" style="left:1040.35px;top:505.00px;font-size:16.00px;color:#383838;transform:scaleX(1.0186);">1213917170</div>
<div class="t" style="left:1138.00px;top:505.00px;font-size:16.00px;color:#383838;transform:scaleX(1.0186);">AB</div>
<div class="t" style="left:42.89px;top:534.00px;font-size:16.00px;color:#383838;transform:scaleX(1.0186);">2526-Q3</div>
<div class="t" style="left:125.99px;top:534.00px;font-size:16.00px;color:#383838;transform:scaleX(0.9415);">BILL</div>
<div class="t" style="left:248.50px;top:534.00px;font-size:16.00px;color:#383838;transform:scaleX(1.0186);">H131129559</div>
<div class="t" style="left:390.83px;top:534.00px;font-size:16.00px;color:#383838;transform:scaleX(0.9171);">YBOR</div>
<div class="t" style="left:1040.43px;top:534.00px;font-size:16.00px;color:#383838;transform:scaleX(1.0186);">1215729468</div>
<div class="t" style="left:1136.53px;top:534.00px;font-size:16.00px;color:#383838;transform:scaleX(1.0186);">IT</div>
<div class="t" style="left:42.89px;top:563.00px;font-size:16.00px;color:#383838;transform:scaleX(1.0186);">2526-Q3</div>
<div class="t" style="left:125.99px;top:563.00px;font-size:16.00px;color:#383838;transform:scaleX(0.9415);">BILL</div>
<div class="t" style="left:248.50px;top:563.00px;font-size:16.00px;color:#383838;transform:scaleX(1.0186);">H131129560</div>
<div class="t" style="left:390.83px;top:563.00px;font-size:16.00px;color:#383838;transform:scaleX(0.9171);">YBOR</div>
<div class="t" style="left:1040.43px;top:563.00px;font-size:16.00px;color:#383838;transform:scaleX(1.0186);">1215729468</div>
<div class="t" style="left:1136.53px;top:563.00px;font-size:16.00px;color:#383838;transform:scaleX(1.0186);">IT</div>
<div class="t" style="left:42.89px;top:592.00px;font-size:16.00px;color:#383838;transform:scaleX(1.0186);">2526-Q3</div>
<div class="t" style="left:125.99px;top:592.00px;font-size:16.00px;color:#383838;transform:scaleX(0.9415);">BILL</div>
<div class="t" style="left:248.50px;top:592.00px;font-size:16.00px;color:#383838;transform:scaleX(1.0186);">H131129603</div>
<div class="t" style="left:390.83px;top:592.00px;font-size:16.00px;color:#383838;transform:scaleX(0.9171);">YBOR</div>
<div class="t" style="left:1040.35px;top:592.00px;font-size:16.00px;color:#383838;transform:scaleX(1.0186);">1213917170</div>
<div class="t" style="left:1138.00px;top:592.00px;font-size:16.00px;color:#383838;transform:scaleX(1.0186);">AB</div>
<div class="t" style="left:42.89px;top:621.00px;font-size:16.00px;color:#383838;transform:scaleX(1.0186);">2526-Q3</div>
<div class="t" style="left:125.99px;top:621.00px;font-size:16.00px;color:#383838;transform:scaleX(0.9415);">BILL</div>
<div class="t" style="left:248.50px;top:621.00px;font-size:16.00px;color:#383838;transform:scaleX(1.0186);">H131129603</div>
<div class="t" style="left:390.83px;top:621.00px;font-size:16.00px;color:#383838;transform:scaleX(0.9171);">YBOR</div>
<div class="t" style="left:1040.35px;top:621.00px;font-size:16.00px;color:#383838;transform:scaleX(1.0186);">1213917170</div>
<div class="t" style="left:1138.00px;top:621.00px;font-size:16.00px;color:#383838;transform:scaleX(1.0186);">AB</div>
<div class="t" style="left:42.89px;top:650.00px;font-size:16.00px;color:#383838;transform:scaleX(1.0186);">2526-Q3</div>
<div class="t" style="left:125.99px;top:650.00px;font-size:16.00px;color:#383838;transform:scaleX(0.9415);">BILL</div>
<div class="t" style="left:248.50px;top:650.00px;font-size:16.00px;color:#383838;transform:scaleX(1.0186);">H131129940</div>
<div class="t" style="left:390.83px;top:650.00px;font-size:16.00px;color:#383838;transform:scaleX(0.9171);">YBOR</div>
<div class="t" style="left:1040.35px;top:650.00px;font-size:16.00px;color:#383838;transform:scaleX(1.0186);">1214615230</div>
<div class="t" style="left:1137.27px;top:650.00px;font-size:16.00px;color:#383838;transform:scaleX(1.0186);">SA</div>
<div class="t" style="left:42.89px;top:679.00px;font-size:16.00px;color:#383838;transform:scaleX(1.0186);">2526-Q3</div>
<div class="t" style="left:125.99px;top:679.00px;font-size:16.00px;color:#383838;transform:scaleX(0.9415);">BILL</div>
<div class="t" style="left:248.50px;top:679.00px;font-size:16.00px;color:#383838;transform:scaleX(1.0186);">H131129940</div>
<div class="t" style="left:390.83px;top:679.00px;font-size:16.00px;color:#383838;transform:scaleX(0.9171);">YBOR</div>
<div class="t" style="left:1040.35px;top:679.00px;font-size:16.00px;color:#383838;transform:scaleX(1.0186);">1214615230</div>
<div class="t" style="left:1137.27px;top:679.00px;font-size:16.00px;color:#383838;transform:scaleX(1.0186);">SA</div>
<div class="t" style="left:42.89px;top:708.00px;font-size:16.00px;color:#383838;transform:scaleX(1.0186);">2526-Q3</div>
<div class="t" style="left:125.99px;top:708.00px;font-size:16.00px;color:#383838;transform:scaleX(0.9415);">BILL</div>
<div class="t" style="left:248.50px;top:708.00px;font-size:16.00px;color:#383838;transform:scaleX(1.0186);">H131129965</div>
<div class="t" style="left:390.83px;top:708.00px;font-size:16.00px;color:#383838;transform:scaleX(0.9171);">YBOR</div>
<div class="t" style="left:1040.35px;top:708.00px;font-size:16.00px;color:#383838;transform:scaleX(1.0186);">1217617260</div>
<div class="t" style="left:1136.53px;top:708.00px;font-size:16.00px;color:#383838;transform:scaleX(1.0186);">In</div>
<div class="t" style="left:42.89px;top:737.00px;font-size:16.00px;color:#383838;transform:scaleX(1.0186);">2526-Q3</div>
<div class="t" style="left:125.99px;top:737.00px;font-size:16.00px;color:#383838;transform:scaleX(0.9415);">BILL</div>
<div class="t" style="left:248.50px;top:737.00px;font-size:16.00px;color:#383838;transform:scaleX(1.0186);">H131129965</div>
<div class="t" style="left:390.83px;top:737.00px;font-size:16.00px;color:#383838;transform:scaleX(0.9171);">YBOR</div>
<div class="t" style="left:1040.35px;top:737.00px;font-size:16.00px;color:#383838;transform:scaleX(1.0186);">1217617260</div>
<div class="t" style="left:1136.53px;top:737.00px;font-size:16.00px;color:#383838;transform:scaleX(1.0186);">In</div>
<div class="t" style="left:42.89px;top:766.00px;font-size:16.00px;color:#383838;transform:scaleX(1.0186);">2526-Q3</div>
<div class="t" style="left:125.99px;top:766.00px;font-size:16.00px;color:#383838;transform:scaleX(0.9415);">BILL</div>
<div class="t" style="left:248.50px;top:766.00px;font-size:16.00px;color:#383838;transform:scaleX(1.0186);">H131130111</div>
<div class="t" style="left:390.83px;top:766.00px;font-size:16.00px;color:#383838;transform:scaleX(0.9171);">YBOR</div>
<div class="t" style="left:1040.35px;top:766.00px;font-size:16.00px;color:#383838;transform:scaleX(1.0186);">1213917170</div>
<div class="t" style="left:1138.00px;top:766.00px;font-size:16.00px;color:#383838;transform:scaleX(1.0186);">AB</div>
<div class="t" style="left:42.89px;top:795.00px;font-size:16.00px;color:#383838;transform:scaleX(1.0186);">2526-Q3</div>
<div class="t" style="left:125.99px;top:795.00px;font-size:16.00px;color:#383838;transform:scaleX(0.9415);">BILL</div>
<div class="t" style="left:248.50px;top:795.00px;font-size:16.00px;color:#383838;transform:scaleX(1.0186);">H131130111</div>
<div class="t" style="left:390.83px;top:795.00px;font-size:16.00px;color:#383838;transform:scaleX(0.9171);">YBOR</div>
<div class="t" style="left:1040.35px;top:795.00px;font-size:16.00px;color:#383838;transform:scaleX(1.0186);">1213917170</div>
<div class="t" style="left:1138.00px;top:795.00px;font-size:16.00px;color:#383838;transform:scaleX(1.0186);">AB</div>
<div class="t" style="left:42.89px;top:824.00px;font-size:16.00px;color:#383838;transform:scaleX(1.0186);">2526-Q3</div>
<div class="t" style="left:125.99px;top:824.00px;font-size:16.00px;color:#383838;transform:scaleX(0.9415);">BILL</div>
<div class="t" style="left:248.50px;top:824.00px;font-size:16.00px;color:#383838;transform:scaleX(1.0186);">H131130446</div>
<div class="t" style="left:390.83px;top:824.00px;font-size:16.00px;color:#383838;transform:scaleX(0.9171);">YBOR</div>
<div class="t" style="left:1040.52px;top:824.00px;font-size:16.00px;color:#383838;transform:scaleX(1.0186);">1213989531</div>
<div class="t" style="left:1137.67px;top:824.00px;font-size:16.00px;color:#383838;transform:scaleX(1.0186);">TE</div>
<div class="t" style="left:42.89px;top:853.00px;font-size:16.00px;color:#383838;transform:scaleX(1.0186);">2526-Q3</div>
<div class="t" style="left:125.99px;top:853.00px;font-size:16.00px;color:#383838;transform:scaleX(0.9415);">BILL</div>
<div class="t" style="left:248.50px;top:853.00px;font-size:16.00px;color:#383838;transform:scaleX(1.0186);">H131130522</div>
<div class="t" style="left:390.83px;top:853.00px;font-size:16.00px;color:#383838;transform:scaleX(0.9171);">YBOR</div>
<div class="t" style="left:1040.35px;top:853.00px;font-size:16.00px;color:#383838;transform:scaleX(1.0186);">1217650870</div>
<div class="t" style="left:1136.70px;top:853.00px;font-size:16.00px;color:#383838;transform:scaleX(1.0186);">NE</div>
<div class="t" style="left:42.89px;top:882.00px;font-size:16.00px;color:#383838;transform:scaleX(1.0186);">2526-Q3</div>
<div class="t" style="left:125.99px;top:882.00px;font-size:16.00px;color:#383838;transform:scaleX(0.9415);">BILL</div>
<div class="t" style="left:248.50px;top:882.00px;font-size:16.00px;color:#383838;transform:scaleX(1.0186);">H131130945</div>
<div class="t" style="left:390.83px;top:882.00px;font-size:16.00px;color:#383838;transform:scaleX(0.9171);">YBOR</div>
<div class="t" style="left:1040.43px;top:882.00px;font-size:16.00px;color:#383838;transform:scaleX(1.0186);">1215729468</div>
<div class="t" style="left:1136.53px;top:882.00px;font-size:16.00px;color:#383838;transform:scaleX(1.0186);">IT</div>
<div class="t" style="left:42.89px;top:911.00px;font-size:16.00px;color:#383838;transform:scaleX(1.0186);">2526-Q3</div>
<div class="t" style="left:125.99px;top:911.00px;font-size:16.00px;color:#383838;transform:scaleX(0.9415);">BILL</div>
<div class="t" style="left:248.50px;top:911.00px;font-size:16.00px;color:#383838;transform:scaleX(1.0186);">H131131039</div>
<div class="t" style="left:390.83px;top:911.00px;font-size:16.00px;color:#383838;transform:scaleX(0.9171);">YBOR</div>
<div class="t" style="left:1040.43px;top:911.00px;font-size:16.00px;color:#383838;transform:scaleX(1.0186);">1215729468</div>
<div class="t" style="left:1136.53px;top:911.00px;font-size:16.00px;color:#383838;transform:scaleX(1.0186);">IT</div>
<div class="b" style="left:0px;top:927px;width:1144px;height:10px;background:#fff;"></div>
<div class="b" style="left:0px;top:926px;width:292px;height:46px;background:linear-gradient(90deg,#e2e9d3 0%,#e7ecd9 40%,#e9ece0 75%,#e6ebdc 100%);background-attachment:fixed;border-top-right-radius:8px;border-top:1px solid #d3d6cc;border-right:1px solid #d3d6cc;"></div>
<div class="b" style="left:362px;top:926px;width:782px;height:46px;background:linear-gradient(90deg,#e2e9d3 0%,#e7ecd9 40%,#e9ece0 75%,#e6ebdc 100%);background-attachment:fixed;border-top-left-radius:8px;border-top:1px solid #d3d6cc;border-left:1px solid #d3d6cc;"></div>
<div class="b" style="left:292px;top:955px;width:70px;height:17px;background:linear-gradient(90deg,#e2e9d3 0%,#e7ecd9 40%,#e9ece0 75%,#e6ebdc 100%);background-attachment:fixed;"></div>
<div class="b" style="left:292px;top:927px;width:70px;height:42px;background:#fff;border-radius:0 0 7px 7px;"></div>
<svg class="s" style="left:34px;top:941px;" width="11" height="17" viewBox="0 0 11 17"><path d="M9 1.5 L2.5 8.5 L9 15.5" fill="none" stroke="#8f8f8f" stroke-width="1.6"/></svg>
<svg class="s" style="left:83px;top:941px;" width="11" height="17" viewBox="0 0 11 17"><path d="M2 1.5 L8.5 8.5 L2 15.5" fill="none" stroke="#8f8f8f" stroke-width="1.6"/></svg>
<div class="t" style="left:179.69px;top:942.00px;font-size:20.10px;color:#2b2b2b;transform:scaleX(1.0079);">Summary</div>
<div class="t" style="left:304.33px;top:938.00px;font-size:20.30px;color:#1f1f1f;transform:scaleX(1.0313);-webkit-text-stroke:0.55px #1f1f1f;">Data</div>
<div class="b" style="left:305px;top:962px;width:45px;height:3px;background:#107c41;border-radius:1.5px;"></div>
<div class="b" style="left:286px;top:937px;width:1px;height:27px;background:#c9c9c9;"></div>
<div class="b" style="left:368px;top:937px;width:1px;height:27px;background:#c9c9c9;"></div>
<svg class="s" style="left:431px;top:941px;" width="19" height="19" viewBox="0 0 19 19"><path d="M9.5 1 V18 M1 9.5 H18" stroke="#3a3a3a" stroke-width="1.6"/></svg>
</body></html>
